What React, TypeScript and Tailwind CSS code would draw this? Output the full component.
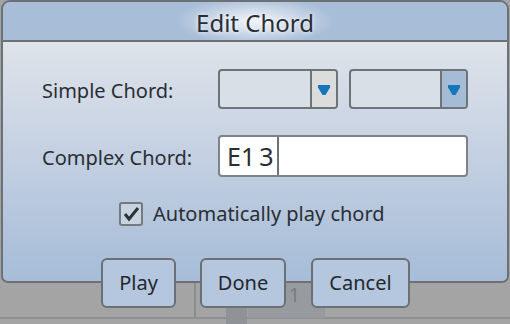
import React from "react";

const font = { fontFamily: '"Noto Sans", "Open Sans", sans-serif' };

function Combo({ active }: { active?: boolean }) {
  return (
    <div className="flex h-[40px] rounded-[4px] border-2 border-[#6d7377] bg-[#d9dfe7] overflow-hidden">
      <div className="flex-1" />
      <div
        className={`flex w-[26px] items-center justify-center border-l-2 border-[#6d7377] ${
          active ? "bg-[#a5bbd6]" : "bg-[#dcdcdc]"
        }`}
      >
        <svg width="12" height="10" viewBox="0 0 12 10" className="mt-[2px]">
          <path d="M0 0 H12 V2.5 L7.5 10 H4.5 L0 2.5 Z" fill="#1676bb" />
        </svg>
      </div>
    </div>
  );
}

function Btn({ w, children }: { w: string; children: React.ReactNode }) {
  return (
    <div
      className={`${w} flex h-[50px] items-center justify-center rounded-[6px] border-2 border-[#6a7075] bg-[#b4c7de] text-[20px] text-[#23272c]`}
    >
      {children}
    </div>
  );
}

export default function App() {
  return (
    <div className="relative h-[324px] w-[510px] overflow-hidden bg-[#a4a4a4]" style={font}>
      {/* background canvas below dialog */}
      <div className="absolute left-0 top-[317px] h-[2px] w-[510px] bg-[#8e9194]" />
      <div className="absolute left-[194px] top-[283px] h-[35px] w-[2px] bg-[#8a8d90]" />
      <div className="absolute left-[248px] top-[283px] h-[35px] w-[77px] bg-[#979ba0]" />
      <div className="absolute left-[226px] top-[305px] h-[19px] w-[21px] bg-[#8f9397]" />
      <div className="absolute left-[289px] top-[286px] text-[19px] leading-none text-[#767b80]">1</div>

      <div className="relative flex flex-col">
        {/* dialog */}
        <div className="mx-[1px] flex h-[283px] flex-col overflow-hidden rounded-t-[9px] rounded-b-[7px] border-2 border-[#6b7175]">
          <div className="flex h-[40px] items-center justify-center border-b-2 border-[#6b7175] bg-[#a7bdd8] bg-[radial-gradient(ellipse_80px_24px_at_center,rgba(255,255,255,0.85),rgba(255,255,255,0.35)_60%,rgba(255,255,255,0)_100%)]">
            <span className="mt-[3px] text-[24px] leading-none text-[#2a2e33] [text-shadow:0_0_4px_rgba(255,255,255,0.9)]">
              Edit Chord
            </span>
          </div>
          <div className="flex flex-1 flex-col bg-gradient-to-b from-[#dfe3ea] to-[#a6bcd8] pl-[39px] pt-[27px] text-[#2a2e33]">
            <div className="flex items-center">
              <div className="mt-[3px] w-[176px] text-[20px] leading-none">Simple Chord:</div>
              <div className="w-[120px]">
                <Combo />
              </div>
              <div className="ml-[11px] w-[119px]">
                <Combo active />
              </div>
            </div>
            <div className="mt-[26px] flex items-center">
              <div className="mt-[3px] w-[176px] text-[20px] leading-none">Complex Chord:</div>
              <div className="flex h-[42px] w-[250px] items-stretch rounded-[4px] border-2 border-[#7d8286] bg-white">
                <div className="flex w-[57px] items-center whitespace-nowrap pl-[7px] text-[25px] leading-none text-[#2a2e33]">
                  E1&#8201;3
                </div>
                <div className="w-[2px] bg-[#6d7277]" />
              </div>
            </div>
            <div className="mt-[25px] flex items-center pl-[77px]">
              <div className="flex h-[24px] w-[24px] items-center justify-center rounded-[3px] border-2 border-[#747a7f] bg-[#c8d3e1]">
                <svg width="17" height="16" viewBox="0 0 17 16">
                  <path d="M2 8 L6 13 L15 2" fill="none" stroke="#2f3337" strokeWidth="3" strokeLinejoin="miter" />
                </svg>
              </div>
              <div className="ml-[10px] text-[20px] leading-none">Automatically play chord</div>
            </div>
          </div>
        </div>
        {/* buttons */}
        <div className="relative mt-[-25px] flex pl-[101px]">
          <Btn w="w-[75px]">Play</Btn>
          <div className="ml-[24px]">
            <Btn w="w-[86px]">Done</Btn>
          </div>
          <div className="ml-[25px]">
            <Btn w="w-[99px]">Cancel</Btn>
          </div>
        </div>
      </div>
    </div>
  );
}
